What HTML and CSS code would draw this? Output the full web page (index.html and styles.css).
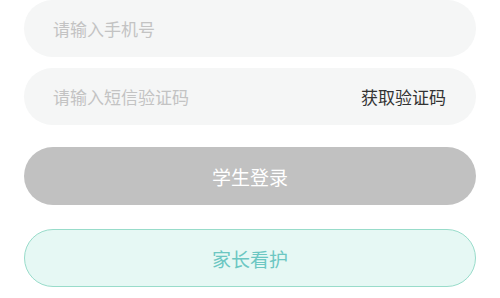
FILE: index.html
```html
<!DOCTYPE html>
<html lang="zh-CN">
<head>
<meta charset="utf-8">
<link rel="stylesheet" href="styles.css">
</head>
<body>
<div class="form">
  <div class="field">
    <span class="placeholder">请输入手机号</span>
  </div>
  <div class="field field-code">
    <span class="placeholder">请输入短信验证码</span>
    <span class="get-code">获取验证码</span>
  </div>
  <div class="btn btn-student">学生登录</div>
  <div class="btn btn-parent">家长看护</div>
</div>
</body>
</html>
```
FILE: styles.css
```css
html, body {
  margin: 0;
  padding: 0;
  background: #ffffff;
}
body {
  font-family: "Noto Sans CJK SC", "Noto Sans", sans-serif;
  width: 500px;
  height: 298px;
  overflow: hidden;
}
.form {
  display: flex;
  flex-direction: column;
  padding: 0 24px;
}
.field {
  height: 57px;
  border-radius: 29px;
  background: #f5f6f6;
  display: flex;
  align-items: center;
  justify-content: space-between;
  padding: 0 30px 0 29px;
  box-sizing: border-box;
  font-size: 17px;
}
.field-code {
  margin-top: 11px;
}
.placeholder {
  color: #c3c3c3;
}
.get-code {
  color: #333333;
}
.btn {
  height: 58px;
  border-radius: 29px;
  display: flex;
  align-items: center;
  justify-content: center;
  font-size: 19px;
  box-sizing: border-box;
}
.btn-student {
  margin-top: 22px;
  background: #c1c1c1;
  color: #ffffff;
}
.btn-parent {
  margin-top: 24px;
  background: #e6f8f4;
  border: 1px solid #98dcca;
  color: #6cc7c2;
}
```
